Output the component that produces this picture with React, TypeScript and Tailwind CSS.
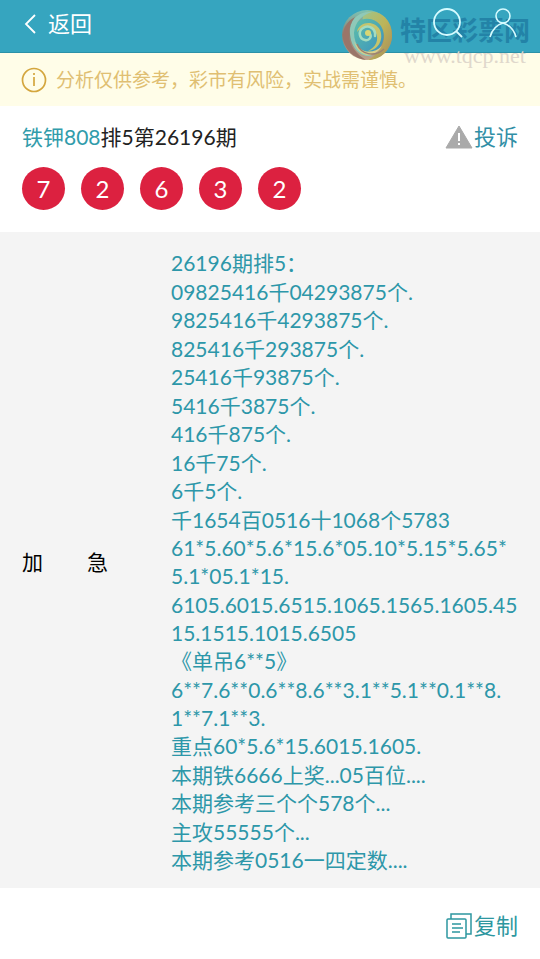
import React from 'react';

const balls = [7, 2, 6, 3, 2];

const lines = [
    '26196期排5：',
    '09825416千04293875个.',
    '9825416千4293875个.',
    '825416千293875个.',
    '25416千93875个.',
    '5416千3875个.',
    '416千875个.',
    '16千75个.',
    '6千5个.',
    '千1654百0516十1068个5783',
    '61*5.60*5.6*15.6*05.10*5.15*5.65*\n5.1*05.1*15.',
    '6105.6015.6515.1065.1565.1605.45\n15.1515.1015.6505',
    '《单吊6**5》',
    '6**7.6**0.6**8.6**3.1**5.1**0.1**8.\n1**7.1**3.',
    '重点60*5.6*15.6015.1605.',
    '本期铁6666上奖...05百位....',
    '本期参考三个个578个...',
    '主攻55555个...',
    '本期参考0516一四定数....',
];

const SiteMark: React.FC = () => (
    <div className="pointer-events-none absolute top-2 right-2.5 flex items-start gap-1.5">
        <svg className="h-[53px] w-[53px]" viewBox="0 0 53 53" fill="none">
            <defs>
                <linearGradient id="rim" x1="0" y1="0" x2="0" y2="1">
                    <stop offset="0" stopColor="#7cc3b4" />
                    <stop offset="0.5" stopColor="#8f7d70" />
                    <stop offset="1" stopColor="#c0a48c" />
                </linearGradient>
                <linearGradient id="gold" x1="0" y1="0" x2="1" y2="1">
                    <stop offset="0" stopColor="#9fc58c" />
                    <stop offset="0.5" stopColor="#bdb458" />
                    <stop offset="1" stopColor="#a58a5c" />
                </linearGradient>
                <linearGradient id="pool" x1="0" y1="0" x2="1" y2="1">
                    <stop offset="0" stopColor="#5fc0a8" />
                    <stop offset="1" stopColor="#3a92c0" />
                </linearGradient>
            </defs>
            <circle cx="26" cy="27" r="25" fill="url(#rim)" />
            <path d="M25 4C41 1 52 14 51 29C50 42 40 52 27 52C39 46 45 34 42 24C39 13 30 9 22 13C21 9 22 6 25 4Z" fill="url(#gold)" />
            <path d="M12 24C12 12 26 7 36 14C46 21 44 37 35 43C24 49 12 38 12 24Z" fill="url(#pool)" />
            <path d="M9 21C10 9 20 3 31 4C21 7 14 14 13 25C13 37 21 46 32 48C18 50 8 38 9 21Z" fill="#8fc9b8" />
            <path d="M2 28C2 38 10 50 25 52C15 46 8 37 8 27C8 20 10 14 14 9C6 13 2 20 2 28Z" fill="#9a7569" />
            <path d="M16 24C18 13 34 12 39 22C43 32 37 42 27 43C35 39 38 32 35 25C31 17 22 17 16 24Z" fill="#c6c46c" />
            <path d="M13 33C18 45 32 47 41 38C34 51 17 50 13 33Z" fill="#d9d08a" />
            <path d="M16 36C20 46 33 50 43 41" stroke="#9c8271" strokeWidth="1.5" />
            <path d="M29 26C31 29 28 33 24 32C18 31 17 23 22 20C28 16 35 21 34 28" stroke="#a4dcc0" strokeWidth="2.5" strokeLinecap="round" />
            <circle cx="27" cy="25" r="3" fill="#d8d673" />
        </svg>
        <div className="pt-2 text-center">
            <div className="text-[26px] leading-7 font-bold text-[#2383a7]">特区彩票网</div>
            <div className="pt-1 font-['Liberation_Serif',serif] text-[22px] leading-4 text-[#e0d8cc]">www.tqcp.net</div>
        </div>
    </div>
);

const App: React.FC = () => {
    return (
        <div className="min-h-screen bg-white font-['Lato','Noto_Sans_CJK_SC',sans-serif] text-[21px] leading-7 text-[#222]">
            <header className="relative flex h-[53px] items-center justify-between border-b border-[#2c91a8] bg-[#36a5bf] pr-5 pb-1 pl-6">
                <button type="button" className="flex items-center gap-3 text-[22px] text-white">
                    <svg className="h-5 w-3" viewBox="0 0 12 20" fill="none" stroke="currentColor" strokeWidth="1.8">
                        <path d="M11 1L2 10L11 19" />
                    </svg>
                    返回
                </button>
                <SiteMark />
                <div className="relative flex items-center gap-6 text-[#d5fbff]">
                    <button type="button" aria-label="搜索">
                        <svg className="h-8 w-8" viewBox="0 0 32 32" fill="none" stroke="currentColor" strokeWidth="1.8">
                            <circle cx="15" cy="14" r="13" />
                            <path d="M24 23L30 29" />
                        </svg>
                    </button>
                    <button type="button" aria-label="我的">
                        <svg className="h-8 w-8" viewBox="0 0 32 32" fill="none" stroke="currentColor" strokeWidth="1.6">
                            <circle cx="15" cy="8" r="7" />
                            <path d="M2 29C4 22 8 17 15 15C22 17 26 22 28 29" />
                        </svg>
                    </button>
                </div>
            </header>

            <div className="flex h-[53px] items-center gap-2 bg-[#fffde8] px-5 text-[19px] text-[#e0bf72]">
                <svg className="h-7 w-7 shrink-0" viewBox="0 0 28 28" fill="none" stroke="#d4a63e" strokeWidth="1.7">
                    <circle cx="14" cy="14" r="11.5" />
                    <path d="M14 11V20M14 7V9" />
                </svg>
                <p>分析仅供参考，彩市有风险，实战需谨慎。</p>
            </div>

            <section className="px-[22px] pt-[17px] pb-[22px]">
                <div className="flex items-center justify-between">
                    <h1>
                        <a href="#author" className="text-[#319cab]">铁钾808</a>排5第26196期
                    </h1>
                    <button type="button" className="flex items-center gap-px text-[22px] text-[#318fa6]">
                        <svg className="h-6 w-7" viewBox="0 0 28 24">
                            <path d="M14 1L27 23H1Z" fill="#aaa" stroke="#aaa" strokeLinejoin="round" />
                            <path d="M14 8V16M14 18V20" stroke="#fff" strokeWidth="2" />
                        </svg>
                        投诉
                    </button>
                </div>
                <div className="mt-4 flex gap-4">
                    {balls.map((n, i) => (
                        <span key={i} className="flex h-[43px] w-[43px] items-center justify-center rounded-full bg-[#dc2140] text-2xl text-white">
                            {n}
                        </span>
                    ))}
                </div>
            </section>

            <section className="flex items-center bg-[#f4f4f4] px-[22px] pt-[17px] pb-[13px]">
                <h2 className="flex w-[86px] shrink-0 justify-between text-black">
                    <span>加</span>
                    <span>急</span>
                </h2>
                <div className="ml-[63px] whitespace-pre-line text-[#2d97a9]">
                    {lines.map((line, i) => (
                        <p key={i} className="odd:pb-px">{line}</p>
                    ))}
                </div>
            </section>

            <footer className="flex justify-end px-[22px] py-6">
                <button type="button" className="flex items-center gap-px text-[22px] text-[#2d97a0]">
                    <svg className="h-7 w-7" viewBox="0 0 28 28" fill="none" stroke="currentColor" strokeWidth="1.5">
                        <rect x="2" y="7" width="19" height="19" rx="1" />
                        <path d="M6 7V2H26V22H21M7 12H16M7 16H18M7 20H15" />
                    </svg>
                    复制
                </button>
            </footer>
        </div>
    );
};

export default App;
